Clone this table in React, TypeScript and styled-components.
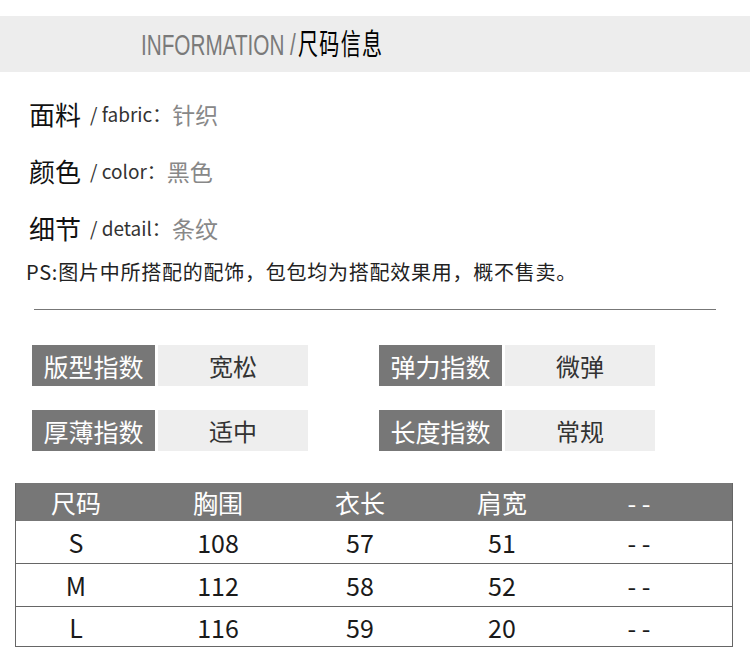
import React from "react";
import styled, { createGlobalStyle } from "styled-components";

const Global = createGlobalStyle`
  html, body { margin: 0; padding: 0; background: #fff; }
  body { font-family: "Noto Sans CJK SC", "Noto Sans", sans-serif; color: #111; }
  * { box-sizing: border-box; }
`;

const Page = styled.div`
  width: 750px;
  height: 662px;
  overflow: hidden;
  padding-top: 16px;
`;

const Banner = styled.div`
  height: 56px;
  background: #ededed;
  display: flex;
  align-items: center;
  padding-left: 141px;
`;

const BannerText = styled.div`
  transform: scaleX(0.69);
  transform-origin: left center;
  white-space: nowrap;
  font-size: 30px;
  line-height: 1;
  margin-top: -1px;
`;

const BannerEn = styled.span`
  font-family: "Liberation Sans", Arial, sans-serif;
  color: #7a7a7a;
`;

const BannerCn = styled.span`
  font-family: "Noto Sans CJK SC", sans-serif;
  font-size: 29px;
  letter-spacing: 2px;
  color: #000;
  margin-left: 3px;
`;

const InfoList = styled.div`
  padding: 13px 0 0 29px;
  display: flex;
  flex-direction: column;
`;

const InfoRow = styled.div`
  height: 57px;
  display: flex;
  align-items: center;
  white-space: nowrap;
`;

const InfoKey = styled.span`
  font-size: 26px;
  color: #111;
  margin-right: 9px;
`;

const InfoEn = styled.span`
  font-size: 19px;
  color: #333;
`;

const InfoVal = styled.span`
  font-size: 23px;
  color: #888;
  margin-left: 1px;
`;

const Note = styled.div`
  margin-left: -3px;
  margin-top: 2px;
  height: 28px;
  line-height: 28px;
  font-size: 20px;
  color: #222;
  white-space: nowrap;
  letter-spacing: 0.75px;
`;

const Divider = styled.div`
  margin: 23px 0 0 34px;
  width: 682px;
  height: 1px;
  background: #777;
`;

const IndexGrid = styled.div`
  margin-top: 35px;
  padding-left: 32px;
  display: grid;
  grid-template-columns: 276px 276px;
  column-gap: 71px;
  row-gap: 24px;
`;

const IndexPair = styled.div`
  display: flex;
  gap: 3px;
  height: 41px;
`;

const IndexLabel = styled.div`
  width: 123px;
  background: #777;
  color: #fff;
  font-size: 25px;
  display: flex;
  align-items: center;
  justify-content: center;
`;

const IndexValue = styled.div`
  width: 150px;
  background: #eeeeee;
  color: #333;
  font-size: 24px;
  display: flex;
  align-items: center;
  justify-content: center;
`;

const Table = styled.div`
  margin: 32px 0 0 15px;
  width: 718px;
  border: 1.5px solid #666;
  border-top: none;
`;

const Row = styled.div<{ $head?: boolean }>`
  display: grid;
  grid-template-columns: 131px repeat(4, 142px) 1fr;
  align-items: center;
  height: ${(p) => (p.$head ? "38px" : "43px")};
  background: ${(p) => (p.$head ? "#777" : "#fff")};
  color: ${(p) => (p.$head ? "#fff" : "#1a1a1a")};
  border-bottom: ${(p) => (p.$head ? "none" : "1px solid #666")};
  font-size: 25px;
  &:last-child {
    height: 39px;
    border-bottom: none;
  }
`;

const Cell = styled.div<{ $shift?: number }>`
  text-align: center;
  white-space: nowrap;
  padding-right: ${(p) => (p.$shift ? `${p.$shift}px` : "0")};
`;

const shiftFor = (i: number) => (i === 0 ? 11 : i === 4 ? 10 : 0);

const info = [
  { k: "面料", en: "fabric", v: "针织" },
  { k: "颜色", en: "color", v: "黑色" },
  { k: "细节", en: "detail", v: "条纹" },
];

const indexes = [
  ["版型指数", "宽松"],
  ["弹力指数", "微弹"],
  ["厚薄指数", "适中"],
  ["长度指数", "常规"],
];

const head = ["尺码", "胸围", "衣长", "肩宽", "- -"];
const rows = [
  ["S", "108", "57", "51", "- -"],
  ["M", "112", "58", "52", "- -"],
  ["L", "116", "59", "20", "- -"],
];

export default function App() {
  return (
    <Page>
      <Global />
      <Banner>
        <BannerText>
          <BannerEn>INFORMATION /</BannerEn>
          <BannerCn>尺码信息</BannerCn>
        </BannerText>
      </Banner>
      <InfoList>
        {info.map((r) => (
          <InfoRow key={r.k}>
            <InfoKey>{r.k}</InfoKey>
            <InfoEn>/ {r.en}：</InfoEn>
            <InfoVal>{r.v}</InfoVal>
          </InfoRow>
        ))}
        <Note>PS:图片中所搭配的配饰，包包均为搭配效果用，概不售卖。</Note>
      </InfoList>
      <Divider />
      <IndexGrid>
        {indexes.map(([l, v]) => (
          <IndexPair key={l}>
            <IndexLabel>{l}</IndexLabel>
            <IndexValue>{v}</IndexValue>
          </IndexPair>
        ))}
      </IndexGrid>
      <Table>
        <Row $head>
          {head.map((h, i) => (
            <Cell key={i} $shift={shiftFor(i)}>{h}</Cell>
          ))}
        </Row>
        {rows.map((r) => (
          <Row key={r[0]}>
            {r.map((c, i) => (
              <Cell key={i} $shift={shiftFor(i)}>{c}</Cell>
            ))}
          </Row>
        ))}
      </Table>
    </Page>
  );
}
